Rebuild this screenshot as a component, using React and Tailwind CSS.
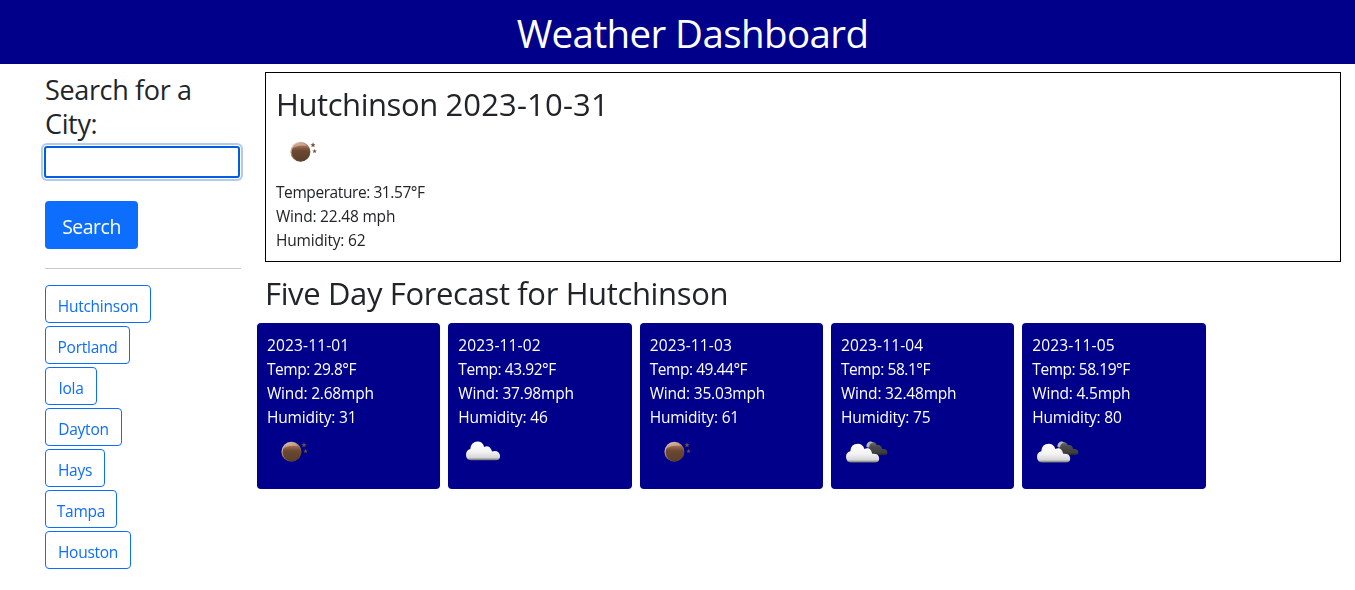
import React from "react";

const cities = [
  { name: "Hutchinson", width: "w-[106px]" },
  { name: "Portland", width: "w-[85px]" },
  { name: "Iola", width: "w-[52px]" },
  { name: "Dayton", width: "w-[77px]" },
  { name: "Hays", width: "w-[60px]" },
  { name: "Tampa", width: "w-[72px]" },
  { name: "Houston", width: "w-[86px]" },
];

const days = [
  { date: "2023-11-01", temp: "29.8", wind: "2.68", humidity: 31, icon: "moon" },
  { date: "2023-11-02", temp: "43.92", wind: "37.98", humidity: 46, icon: "cloud" },
  { date: "2023-11-03", temp: "49.44", wind: "35.03", humidity: 61, icon: "moon" },
  { date: "2023-11-04", temp: "58.1", wind: "32.48", humidity: 75, icon: "clouds" },
  { date: "2023-11-05", temp: "58.19", wind: "4.5", humidity: 80, icon: "clouds" },
];

const STAR = "M0-2.3 .65-.75 2.2-.7 1 .35 1.4 1.9 0 1-1.4 1.9-1 .35-2.2-.7-.65-.75Z";

function WeatherDefs() {
  return (
    <svg width="0" height="0" className="absolute">
      <defs>
        <linearGradient id="moonBody" x1="0" y1="0" x2="0" y2="1">
          <stop offset="0" stopColor="#c39273" />
          <stop offset="0.22" stopColor="#936348" />
          <stop offset="0.42" stopColor="#6c4832" />
          <stop offset="1" stopColor="#5a3f2c" />
        </linearGradient>
        <linearGradient id="moonRim" x1="0" y1="0" x2="0.6" y2="1">
          <stop offset="0" stopColor="#f3e2d6" />
          <stop offset="0.5" stopColor="#a98168" />
          <stop offset="1" stopColor="#5b3e2c" />
        </linearGradient>
        <linearGradient id="cloudBody" x1="0" y1="0" x2="0" y2="1">
          <stop offset="0" stopColor="#ffffff" />
          <stop offset="0.55" stopColor="#f3f3f3" />
          <stop offset="0.86" stopColor="#d6d6d6" />
          <stop offset="1" stopColor="#6f6f6f" />
        </linearGradient>
        <linearGradient id="darkBody" x1="0" y1="0" x2="0" y2="1">
          <stop offset="0" stopColor="#777777" />
          <stop offset="0.3" stopColor="#4d4d4d" />
          <stop offset="0.8" stopColor="#3c3c3c" />
          <stop offset="1" stopColor="#171717" />
        </linearGradient>
      </defs>
    </svg>
  );
}

function WeatherIcon({ name }) {
  return (
    <svg className="block h-[50px] w-[50px]" viewBox="0 0 50 50">
      {name === "moon" && (
        <g>
          <circle cx="24.4" cy="22.8" r="10" fill="url(#moonRim)" />
          <circle cx="24.8" cy="23.2" r="9" fill="url(#moonBody)" />
          <path d="M17 19.6Q19 14.4 25 14.4Q29 14.4 31 16.8Q26 15.9 21.5 17.2Q18.4 18.2 17 19.6Z" fill="#e7c9b5" opacity=".55" />
          <path transform="translate(37 16) scale(1.15)" d={STAR} fill="#765039" />
          <path transform="translate(38.6 22.2)" d={STAR} fill="#765039" />
        </g>
      )}
      {name === "cloud" && (
        <path
          d="M13.5 31.2Q8 31.2 8 25.9Q8 21.2 12.3 20.1Q13 12.5 19.7 12.5Q24.5 12.5 26.2 17.9Q31.6 15.6 34.2 22.5Q38 21.3 40.6 23.5Q42.1 25 42.1 27Q42.1 31.2 38 31.2Z"
          fill="url(#cloudBody)"
        />
      )}
      {name === "clouds" && (
        <g>
          <path
            d="M26 27Q24.8 12.8 30.2 12.8Q34 12.8 35.9 16.1Q39.8 15 41.3 20Q46.4 19.7 46.4 23.5Q46.4 26 43.4 26Z"
            fill="url(#darkBody)"
          />
          <path d="M25.2 17.5Q26 12.4 30 12.5L32 13.5Q28.6 14 28 18.5Z" fill="#b7b7b7" />
          <path
            d="M11 33.5Q5 33.5 5 27.9Q5 23.2 9.3 22.2Q10 14.8 16.7 14.8Q21.5 14.8 23.4 19.9Q29.5 17.6 31.2 24.8Q37.7 24.2 38.2 29.2Q38.2 33.5 34 33.5Z"
            fill="url(#cloudBody)"
          />
        </g>
      )}
    </svg>
  );
}

export default function App() {
  return (
    <div className="h-[590px] overflow-hidden bg-white font-['Open_Sans',sans-serif] text-[15.5px] leading-6 tracking-[-0.2px] text-[#212529]">
      <WeatherDefs />
      <header className="h-16 bg-[#00008b] pt-2 pl-[30px] text-center text-white">
        <h1 className="text-[38.5px] leading-[50px] tracking-[-0.6px]">Weather Dashboard</h1>
      </header>
      <div className="flex">
        <aside className="w-[241px] shrink-0 pt-[9px] pl-[45px]">
          <h2 className="w-[190px] text-[27px] leading-[33.6px] tracking-[-0.35px]">Search for a City:</h2>
          <input
            autoFocus
            aria-label="City"
            className="mt-1.5 -ml-px block h-8 w-[196px] rounded-[3px] border-2 border-[#005fe0] bg-white px-2 caret-transparent shadow-[0_0_0_1px_#ffffff,0_0_0_3px_#b3c9ee] outline-none"
          />
          <button className="mt-[23px] flex h-12 w-[93px] items-center justify-center rounded bg-[#0d6efd] pt-1 text-[19.4px] tracking-[-0.45px] text-white">
            Search
          </button>
          <hr className="mt-[19px] border-t border-[#c8c9ca]" />
          <ul className="mt-4 flex flex-col gap-[3px]">
            {cities.map((c) => (
              <li key={c.name}>
                <button
                  className={`flex h-[38px] items-center justify-center rounded border border-[#0d6efd] pt-[3px] text-[#0d6efd] tracking-[-0.25px] ${c.width}`}
                >
                  {c.name}
                </button>
              </li>
            ))}
          </ul>
        </aside>
        <main className="flex-1 pt-2 pr-3.5 pl-6">
          <section className="h-[190px] border border-black px-2.5 pt-3">
            <h2 className="mb-1.5 text-[31px] leading-[38.4px] tracking-[-0.43px]">
              Hutchinson <span className="tracking-[0.17px]">2023-10-31</span>
            </h2>
            <WeatherIcon name="moon" />
            <div className="pt-px">
              <p className="tracking-[-0.42px]">Temperature: 31.57°F</p>
              <p>Wind: 22.48 mph</p>
              <p>Humidity: 62</p>
            </div>
          </section>
          <h2 className="mt-3 text-[31px] leading-[38.4px] tracking-[-0.36px]">Five Day Forecast for Hutchinson</h2>
          <section className="mt-[10.6px] -ml-2 flex gap-2">
            {days.map((d) => (
              <article key={d.date} className="h-[166px] w-[183.33px] rounded bg-[#00008b] p-2.5 text-white">
                <p className="tracking-[0.15px]">{d.date}</p>
                <p className="tracking-[-0.45px]">Temp: {d.temp}°F</p>
                <p>Wind: {d.wind}mph</p>
                <p>Humidity: {d.humidity}</p>
                <WeatherIcon name={d.icon} />
              </article>
            ))}
          </section>
        </main>
      </div>
    </div>
  );
}
